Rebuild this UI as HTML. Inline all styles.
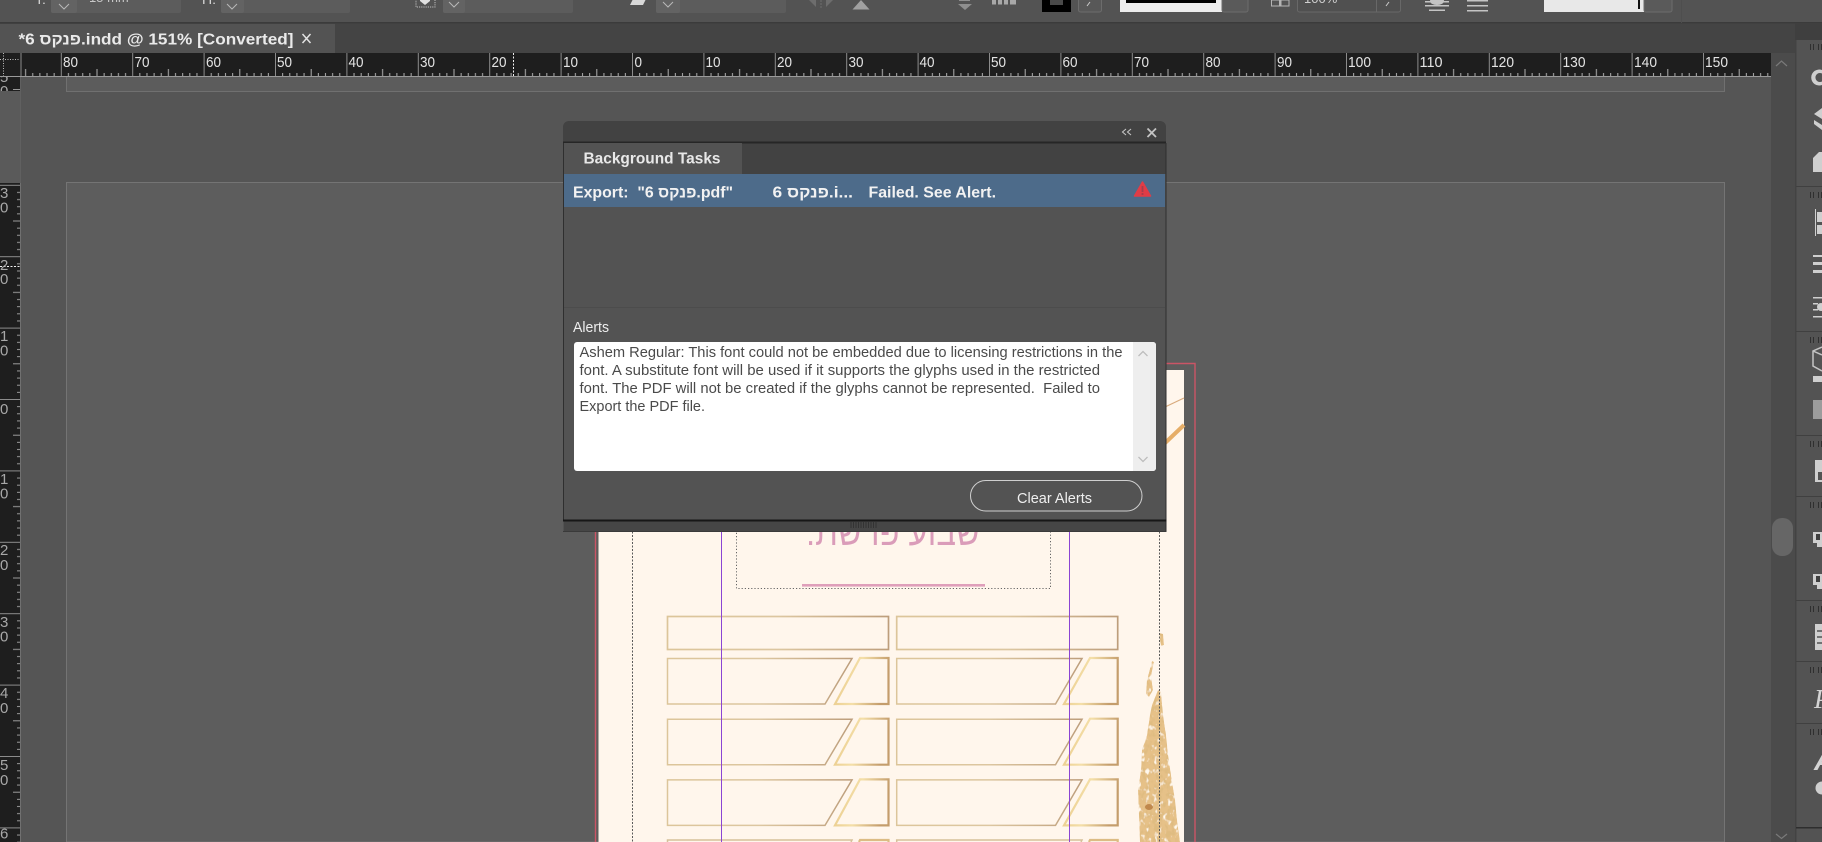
<!DOCTYPE html>
<html lang="en"><head><meta charset="utf-8"><title>Background Tasks</title>
<style>
html,body{margin:0;padding:0;background:#545454;width:1822px;height:842px;overflow:hidden}
svg{display:block;font-family:"Liberation Sans",sans-serif;overflow:hidden}
.rl{font-size:15px;fill:#e4e4e4}
.vl{font-size:15px;fill:#a8a8a8}
.pre{white-space:pre}
</style></head><body>
<svg width="1822" height="842" viewBox="0 0 1822 842" xmlns="http://www.w3.org/2000/svg">
<defs>
<linearGradient id="sm" x1="0" y1="0" x2="1" y2="0.2"><stop offset="0" stop-color="#e8c888"/><stop offset=".5" stop-color="#f4dfa8"/><stop offset="1" stop-color="#c49d6c"/></linearGradient>
<linearGradient id="bg1" x1="0" y1="0" x2="1" y2="0"><stop offset="0" stop-color="#dcc59a"/><stop offset=".5" stop-color="#dcc6a0"/><stop offset="1" stop-color="#bd9e7c"/></linearGradient>
<pattern id="rt" patternUnits="userSpaceOnUse" width="71.4" height="24" patternTransform="translate(632 53)">
<rect x="0" y="0" width="1" height="23" fill="#8c8c8c"/>
<g fill="#b0b0b0"><rect x="7.14" y="20" width="1" height="3"/><rect x="14.28" y="20" width="1" height="3"/><rect x="21.42" y="20" width="1" height="3"/><rect x="28.56" y="20" width="1" height="3"/><rect x="35.7" y="16" width="1" height="7"/><rect x="42.84" y="20" width="1" height="3"/><rect x="49.98" y="20" width="1" height="3"/><rect x="57.12" y="20" width="1" height="3"/><rect x="64.26" y="20" width="1" height="3"/></g>
</pattern>
<pattern id="rl" patternUnits="userSpaceOnUse" width="21" height="71.4" patternTransform="translate(0 399)">
<rect x="0" y="0" width="20" height="1" fill="#8c8c8c"/>
<g fill="#9a9a9a"><rect x="17" y="7.14" width="3" height="1"/><rect x="17" y="14.28" width="3" height="1"/><rect x="17" y="21.42" width="3" height="1"/><rect x="17" y="28.56" width="3" height="1"/><rect x="13" y="35.7" width="7" height="1"/><rect x="17" y="42.84" width="3" height="1"/><rect x="17" y="49.98" width="3" height="1"/><rect x="17" y="57.12" width="3" height="1"/><rect x="17" y="64.26" width="3" height="1"/></g>
</pattern>
<filter id="gold" x="0" y="0" width="1" height="1">
<feTurbulence type="fractalNoise" baseFrequency="0.24 0.16" numOctaves="2" seed="7" result="n"/>
<feColorMatrix in="n" type="matrix" values="0 0 0 0 .74  0 0 0 0 .5  0 0 0 0 .22  5 0 0 0 -2.3" result="dark"/>
<feColorMatrix in="n" type="matrix" values="0 0 0 0 1  0 0 0 0 .95  0 0 0 0 .86  0 5 0 0 -2.9" result="light"/>
<feMerge result="m"><feMergeNode in="SourceGraphic"/><feMergeNode in="dark"/><feMergeNode in="light"/></feMerge>
<feComposite in="m" in2="SourceGraphic" operator="in"/>
</filter>
<g id="row">
<polygon points="667.5,658.5 852,658.5 825,704 667.5,704" fill="none" stroke="url(#bg1)" stroke-width="1.5"/>
<polygon points="860,658 888.5,658 888.5,704 835,704" fill="none" stroke="url(#sm)" stroke-width="2.2"/>
<polygon points="896.7,658.5 1082,658.5 1055.5,704 896.7,704" fill="none" stroke="url(#bg1)" stroke-width="1.5"/>
<polygon points="1090,658 1117.7,658 1117.7,704 1064,704" fill="none" stroke="url(#sm)" stroke-width="2.2"/>
</g>
</defs>

<!-- canvas -->
<rect width="1822" height="842" fill="#555"/>
<path d="M66.500 60H1724.500V91.500H66.500z" fill="#5c5c5c" stroke="#707070"/>
<path d="M66.500 842V182.500H1724.500V842z" fill="#5d5d5d" stroke="#747474"/>
<rect x="20" y="76" width="1" height="766" fill="#606060"/>

<!-- document page -->
<path d="M595.500 842V363.500H1195V842" fill="none" stroke="#cb5566" stroke-width="1.400"/>
<rect x="598.500" y="370" width="585.500" height="472" fill="#fff6ec"/>
<path d="M1165 407 L1184 398" stroke="#d8aa7c" stroke-width="1.200" fill="none"/>
<path d="M1164 444 L1184 425" stroke="#e6ae68" stroke-width="4" fill="none"/>
<text x="893" y="545" text-anchor="middle" direction="rtl" font-size="38" fill="#da9cb9" textLength="174" lengthAdjust="spacingAndGlyphs">שבוע פרשת:</text>
<rect x="802" y="584" width="183" height="2.600" fill="#df9fba"/>
<path d="M736.500 520V588.500H1050.500V520" fill="none" stroke="#666" stroke-width="1" stroke-dasharray="1.200 2"/>

<!-- gold frames -->
<rect x="667.500" y="616.500" width="221" height="33" fill="none" stroke="url(#bg1)" stroke-width="1.700"/>
<rect x="896.700" y="616.500" width="221" height="33" fill="none" stroke="url(#bg1)" stroke-width="1.700"/>
<use href="#row"/>
<use href="#row" y="60.700"/>
<use href="#row" y="121.400"/>
<path d="M667.500 842V840H852L851 842M896.700 842V840H1082L1081 842" fill="none" stroke="#d6c09a" stroke-width="1.500"/>
<path d="M859 842L860 840H888.500V842M1089 842L1090 840H1117.700V842" fill="none" stroke="#dcbc84" stroke-width="2.200"/>

<!-- gold splatter -->
<g filter="url(#gold)" fill="#e6c188">
<polygon points="1158,690 1161,692 1163,715 1166,735 1168,755 1171,775 1175,800 1177,820 1180,842 1140,842 1139,815 1138,790 1141,770 1142,750 1147,735 1150,715 1152,705"/>
<polygon points="1159,633 1163,634 1164,645 1161,646"/>
<polygon points="1152,661 1154,662 1151,676 1153,690 1149,697 1146,694 1147,680"/>
</g>
<ellipse cx="1149" cy="807" rx="4" ry="3" fill="#b67a3f" opacity=".8"/>

<!-- guides -->
<path d="M632.500 500V842M1159.500 500V842" stroke="#5a5a5a" stroke-width="1" stroke-dasharray="2 1.500"/>
<path d="M721.500 500V842M1069.500 500V842" stroke="#8b45d3" stroke-width="1"/>

<!-- top toolbar -->
<rect width="1822" height="23" fill="#535353"/>
<rect y="22" width="1822" height="1.500" fill="#3b3b3b"/>
<g fill="#5c5c5c">
<rect x="51" y="-3" width="130" height="16" rx="2"/>
<rect x="221" y="-3" width="129" height="16" rx="2"/>
<rect x="443" y="-3" width="130" height="16" rx="2"/>
<rect x="656" y="-3" width="130" height="16" rx="2"/>
</g>
<g fill="#636363">
<rect x="51" y="-3" width="26" height="16" rx="2"/>
<rect x="221" y="-3" width="23" height="16" rx="2"/>
<rect x="443" y="-3" width="22" height="16" rx="2"/>
<rect x="656" y="-3" width="24" height="16" rx="2"/>
</g>
<path d="M59 4l5 5 5-5M227 4l5 5 5-5M449 2l5 5 5-5M663 2l5 5 5-5" fill="none" stroke="#b8b8b8" stroke-width="1"/>
<text x="35" y="4" font-size="14" fill="#d8d8d8">T:</text>
<text x="89" y="2" font-size="13" fill="#c8c8c8">15 mm</text>
<text x="202" y="4" font-size="14" fill="#d8d8d8">H:</text>
<path d="M416 -1V7H435V-1" fill="none" stroke="#bdbdbd" stroke-dasharray="1.200 1"/>
<path d="M420 -1h10v2l-5 4-5-4z" fill="#e0e0e0"/>
<path d="M633 -1h13l-3 6h-13z" fill="#d8d8d8"/>
<path d="M808 -1l8 8V-1zM834 -1l-8 8V-1z" fill="#6d6d6d"/>
<path d="M821 0v8" stroke="#6d6d6d" stroke-dasharray="2 1"/>
<path d="M861 0l8.500 9.500H852.500z" fill="#a0a0a0"/>
<path d="M959 0h11v1h-11zM958 4h14l-7 6z" fill="#8f8f8f"/>
<g fill="#a8a8a8"><rect x="992" y="0" width="4" height="4.500"/><rect x="998" y="0" width="4" height="4.500"/><rect x="1004" y="0" width="4" height="4.500"/><rect x="1010" y="0" width="6" height="4.500"/></g>
<rect x="1042" y="-3" width="29" height="15" fill="#000"/>
<rect x="1050" y="-3" width="13" height="8" fill="#4a4a4a"/>
<rect x="1078.500" y="-3" width="23" height="15" rx="2" fill="#585858" stroke="#6c6c6c"/>
<path d="M1087 6l3-4" stroke="#ccc" fill="none"/>
<rect x="1120" y="-3" width="102" height="15" fill="#ececec"/>
<rect x="1126" y="-3" width="90" height="6" fill="#000"/>
<rect x="1222" y="-3" width="26" height="15" rx="2" fill="#5a5a5a" stroke="#6c6c6c"/>
<path d="M1271.500 6V0H1289V6z" fill="none" stroke="#b4b4b4"/><rect x="1279" y="0" width="2.500" height="6" fill="#b4b4b4"/>
<rect x="1297.500" y="-3" width="103" height="15" rx="2" fill="#505050" stroke="#686868"/>
<rect x="1376" y="-3" width="1" height="15" fill="#686868"/>
<text x="1304" y="3" font-size="13" fill="#cfcfcf">100%</text>
<path d="M1386 6l3-4" stroke="#ccc" fill="none"/>
<g fill="#c4c4c4"><ellipse cx="1437" cy="1" rx="7" ry="4"/><rect x="1425" y="1" width="24" height="1.500"/><rect x="1425" y="5" width="24" height="1.500"/><rect x="1429" y="9.500" width="16" height="1.500"/>
<rect x="1467" y="0" width="21" height="1.500"/><rect x="1467" y="5" width="21" height="1.500"/><rect x="1467" y="10" width="21" height="1.500"/></g>
<rect x="1544" y="-3" width="100" height="15" fill="#e8e8e8"/>
<rect x="1638" y="-3" width="2" height="12" fill="#111"/>
<rect x="1644" y="-3" width="28" height="15" rx="2" fill="#5a5a5a" stroke="#6c6c6c"/>
<rect x="1681" y="0" width="1" height="23" fill="#4e4e4e"/>

<!-- tab bar -->
<rect y="23.500" width="1796" height="29.500" fill="#444"/>
<rect y="24" width="335" height="29" fill="#535353"/>
<text class="pre" x="18.500" y="44.500" font-size="16" font-weight="bold" fill="#eaeaea" direction="ltr" textLength="275" lengthAdjust="spacingAndGlyphs">*6 פנקס.indd @ 151% [Converted]</text>
<path d="M302.500 34l8 9M310.500 34l-8 9" stroke="#e2e2e2" stroke-width="1.500" fill="none"/>

<!-- top ruler -->
<rect x="0" y="53" width="1771" height="23" fill="#1e1e1e"/>
<rect x="21" y="53" width="1750" height="23" fill="url(#rt)"/>
<rect x="0" y="76" width="1771" height="1" fill="#9a9a9a"/>
<rect x="20.500" y="53" width="1" height="23" fill="#8c8c8c"/>
<path d="M3.500 53V76M0 59.500H20" stroke="#bdbdbd" stroke-width="1" stroke-dasharray="1 1.500" fill="none"/>
<path d="M513.500 53V76" stroke="#f0f0f0" stroke-width="1" stroke-dasharray="2 1.500"/>
<g class="rl">
<text x="63" y="67" textLength="15" lengthAdjust="spacingAndGlyphs">80</text><text x="134.500" y="67" textLength="15" lengthAdjust="spacingAndGlyphs">70</text><text x="206" y="67" textLength="15" lengthAdjust="spacingAndGlyphs">60</text><text x="277" y="67" textLength="15" lengthAdjust="spacingAndGlyphs">50</text><text x="348.500" y="67" textLength="15" lengthAdjust="spacingAndGlyphs">40</text><text x="420" y="67" textLength="15" lengthAdjust="spacingAndGlyphs">30</text><text x="491.500" y="67" textLength="15" lengthAdjust="spacingAndGlyphs">20</text><text x="563" y="67" textLength="15" lengthAdjust="spacingAndGlyphs">10</text><text x="634.500" y="67" textLength="7.500" lengthAdjust="spacingAndGlyphs">0</text><text x="705.500" y="67" textLength="15" lengthAdjust="spacingAndGlyphs">10</text><text x="777" y="67" textLength="15" lengthAdjust="spacingAndGlyphs">20</text><text x="848.500" y="67" textLength="15" lengthAdjust="spacingAndGlyphs">30</text><text x="919.500" y="67" textLength="15" lengthAdjust="spacingAndGlyphs">40</text><text x="991" y="67" textLength="15" lengthAdjust="spacingAndGlyphs">50</text><text x="1062.500" y="67" textLength="15" lengthAdjust="spacingAndGlyphs">60</text><text x="1134" y="67" textLength="15" lengthAdjust="spacingAndGlyphs">70</text><text x="1205.500" y="67" textLength="15" lengthAdjust="spacingAndGlyphs">80</text><text x="1277" y="67" textLength="15" lengthAdjust="spacingAndGlyphs">90</text><text x="1348" y="67" textLength="23" lengthAdjust="spacingAndGlyphs">100</text><text x="1419.500" y="67" textLength="23" lengthAdjust="spacingAndGlyphs">110</text><text x="1491" y="67" textLength="23" lengthAdjust="spacingAndGlyphs">120</text><text x="1562.500" y="67" textLength="23" lengthAdjust="spacingAndGlyphs">130</text><text x="1634" y="67" textLength="23" lengthAdjust="spacingAndGlyphs">140</text><text x="1705" y="67" textLength="23" lengthAdjust="spacingAndGlyphs">150</text>
</g>

<!-- left ruler -->
<rect x="0" y="77" width="20" height="14" fill="#1e1e1e"/>
<rect x="0" y="91" width="20" height="92" fill="#5a5a5a"/>
<rect x="0" y="183" width="20" height="659" fill="#1e1e1e"/>
<rect x="0" y="183" width="21" height="659" fill="url(#rl)"/>
<rect x="13" y="89" width="7" height="1" fill="#9a9a9a"/>
<rect x="20" y="183" width="1" height="659" fill="#707070"/>
<path d="M0 266.500H20" stroke="#f0f0f0" stroke-dasharray="2 1.500"/>
<svg x="0" y="77" width="20" height="14"><text x="0" y="5" class="vl">5</text><text x="0" y="19" class="vl">0</text></svg>
<g class="vl">
<text x="0" y="198">3</text><text x="0" y="212.500">0</text>
<text x="0" y="270">2</text><text x="0" y="284">0</text>
<text x="0" y="341">1</text><text x="0" y="355.500">0</text>
<text x="0" y="414">0</text>
<text x="0" y="484">1</text><text x="0" y="498.500">0</text>
<text x="0" y="555">2</text><text x="0" y="570">0</text>
<text x="0" y="627">3</text><text x="0" y="641.500">0</text>
<text x="0" y="698">4</text><text x="0" y="713">0</text>
<text x="0" y="770">5</text><text x="0" y="785">0</text>
<text x="0" y="838.500">6</text>
</g>

<!-- vertical scrollbar -->
<rect x="1771" y="53" width="25" height="789" fill="#4b4b4b"/>
<path d="M1776 66l5.500-5 5.500 5" fill="none" stroke="#7a7a7a" stroke-width="1.200"/>
<path d="M1776 834l5.500 4.500 5.500-4.500" fill="none" stroke="#7a7a7a" stroke-width="1.200"/>
<rect x="1772" y="518" width="21" height="38" rx="10" fill="#666"/>

<!-- right dock -->
<rect x="1795" y="23" width="27" height="819" fill="#535353"/>
<rect x="1795" y="23" width="27" height="17" fill="#3f3f3f"/>
<rect x="1795" y="40" width="1.500" height="802" fill="#434343"/>
<g fill="#404040">
<rect x="1796" y="186" width="26" height="1"/><rect x="1796" y="331" width="26" height="1"/><rect x="1796" y="435" width="26" height="1"/><rect x="1796" y="496" width="26" height="1"/><rect x="1796" y="600" width="26" height="1"/><rect x="1796" y="661" width="26" height="1"/><rect x="1796" y="723" width="26" height="1"/><rect x="1796" y="827" width="26" height="1.500" fill="#2e2e2e"/>
</g>
<path d="M1810.500 44v6M1813.500 44v6M1818.500 44v6M1821.500 44v6M1810.500 192v6M1813.500 192v6M1818.500 192v6M1821.500 192v6M1810.500 337v6M1813.500 337v6M1818.500 337v6M1821.500 337v6M1810.500 441v6M1813.500 441v6M1818.500 441v6M1821.500 441v6M1810.500 502v6M1813.500 502v6M1818.500 502v6M1821.500 502v6M1810.500 606v6M1813.500 606v6M1818.500 606v6M1821.500 606v6M1810.500 667v6M1813.500 667v6M1818.500 667v6M1821.500 667v6M1810.500 729v6M1813.500 729v6M1818.500 729v6M1821.500 729v6" stroke="#2f2f2f" stroke-width="1"/>
<g fill="#cfcfcf">
<path d="M1822 70a8 8 0 1 0 0 15v-3.500a4.500 4.500 0 1 1 0-8z"/>
<path d="M1822 108l-8 6 8 5zM1814 120l8 5v5l-8-6z"/>
<path d="M1819 152h3v20h-9v-14z"/>
<rect x="1815" y="209" width="1" height="27"/><rect x="1817" y="212" width="5" height="10"/><rect x="1817" y="225" width="5" height="9"/>
<rect x="1813" y="255" width="9" height="2"/><rect x="1813" y="262" width="9" height="3"/><rect x="1813" y="270" width="9" height="3"/>
<rect x="1813" y="297" width="9" height="1.500"/><rect x="1813" y="303" width="5" height="1.500"/><rect x="1813" y="309" width="5" height="1.500"/><rect x="1813" y="316" width="9" height="1.500"/><circle cx="1821" cy="307" r="4"/>
<rect x="1813" y="376" width="9" height="6"/>
<rect x="1815" y="460" width="7" height="22"/>
<rect x="1813" y="532" width="9" height="11"/><rect x="1817" y="541" width="5" height="6"/>
<rect x="1813" y="574" width="9" height="11"/><rect x="1817" y="583" width="5" height="6"/>
<rect x="1815" y="624" width="7" height="26"/>
<circle cx="1822" cy="788" r="6.500"/>
</g>
<path d="M1822 347l-9 4v15l9 5M1813 351l9 4" fill="none" stroke="#c4c4c4" stroke-width="1.500"/>
<rect x="1813" y="400" width="9" height="19" fill="#9c9c9c"/>
<rect x="1818" y="472" width="4" height="8" fill="#535353"/>
<rect x="1816" y="534" width="4" height="6" fill="#404040"/><rect x="1816" y="576" width="4" height="6" fill="#404040"/>
<path d="M1817 631h5M1817 637h5M1817 643h5" stroke="#535353" stroke-width="1.500"/>
<text x="1814" y="708" font-family="Liberation Serif" font-style="italic" font-size="27" fill="#d4d4d4">P</text>
<text x="1814" y="770" font-style="italic" font-weight="bold" font-size="28" fill="#d4d4d4">A</text>

<!-- Background Tasks panel -->
<path d="M563 531.500V127a6 6 0 0 1 6-6h591a6 6 0 0 1 6 6V531.500z" fill="#535353"/>
<path d="M563 142V127a6 6 0 0 1 6-6h591a6 6 0 0 1 6 6V142z" fill="#424242"/>
<rect x="563" y="143" width="603" height="31" fill="#424242"/>
<rect x="563" y="141.500" width="603" height="2" fill="#262626"/>
<rect x="564" y="143" width="178" height="31" fill="#535353"/>
<text x="583.500" y="163.500" font-size="16" font-weight="bold" fill="#e8e8e8" textLength="137" lengthAdjust="spacingAndGlyphs">Background Tasks</text>
<path d="M1126 129l-3.500 3 3.500 3M1131 129l-3.500 3 3.500 3" fill="none" stroke="#c4c4c4" stroke-width="1.100"/>
<path d="M1147.500 128.500l8.500 8.500M1156 128.500l-8.500 8.500" fill="none" stroke="#c4c4c4" stroke-width="1.800"/>

<rect x="564" y="174" width="601" height="33" fill="#4d6b8a"/>
<text class="pre" x="573" y="197.500" font-size="16" font-weight="bold" fill="#f2f2f2" direction="ltr" textLength="160" lengthAdjust="spacingAndGlyphs">Export:  "6 פנקס.pdf"</text>
<text class="pre" x="772.500" y="197.500" font-size="16" font-weight="bold" fill="#f2f2f2" direction="ltr" textLength="80.500" lengthAdjust="spacingAndGlyphs">6 פנקס.i...</text>
<text x="868.500" y="197.500" font-size="16" font-weight="bold" fill="#f2f2f2" textLength="127.500" lengthAdjust="spacingAndGlyphs">Failed. See Alert.</text>
<path d="M1142.500 182L1150.500 196H1134.500z" fill="#e03c46" stroke="#e03c46" stroke-width="1.500" stroke-linejoin="round"/>
<rect x="1141.600" y="186" width="1.800" height="6" fill="#a63d4c"/><rect x="1141.600" y="193" width="1.800" height="2" fill="#a63d4c"/>

<rect x="564" y="307" width="601" height="1" fill="#4c4c4c"/>
<text x="573" y="332" font-size="15" fill="#eee" textLength="36" lengthAdjust="spacingAndGlyphs">Alerts</text>

<rect x="574" y="342" width="582" height="129" rx="3" fill="#fff"/>
<path d="M1133 342h20a3 3 0 0 1 3 3v123a3 3 0 0 1-3 3h-20z" fill="#eeeeee"/>
<path d="M1138.500 356l4.500-4.500 4.500 4.500M1138.500 457l4.500 4.500 4.500-4.500" fill="none" stroke="#bdbdbd" stroke-width="1.300"/>
<g font-size="15" fill="#4a4a4a">
<text class="pre" x="579.500" y="357" textLength="543" lengthAdjust="spacingAndGlyphs">Ashem Regular: This font could not be embedded due to licensing restrictions in the</text>
<text class="pre" x="579.500" y="375" textLength="520.500" lengthAdjust="spacingAndGlyphs">font. A substitute font will be used if it supports the glyphs used in the restricted</text>
<text class="pre" x="579.500" y="393" textLength="520.500" lengthAdjust="spacingAndGlyphs">font. The PDF will not be created if the glyphs cannot be represented.  Failed to</text>
<text class="pre" x="579.500" y="411" textLength="125.500" lengthAdjust="spacingAndGlyphs">Export the PDF file.</text>
</g>
<rect x="970.500" y="480.500" width="171.500" height="30.500" rx="15.250" fill="none" stroke="#cfcfcf" stroke-width="1"/>
<text x="1017" y="503" font-size="15" fill="#efefef" textLength="75" lengthAdjust="spacingAndGlyphs">Clear Alerts</text>

<rect x="563" y="143" width="1" height="378" fill="#2f2f2f"/>
<rect x="1165.500" y="143" width="1" height="388" fill="#2f2f2f"/>
<rect x="563" y="519.500" width="603.500" height="2" fill="#171717"/>
<rect x="564" y="521.500" width="601.500" height="10" fill="#464646"/>
<rect x="563" y="531" width="603.500" height="1" fill="#3a3a3a"/>
<path d="M851 522v6M853.500 522v6M856 522v6M858.500 522v6M861 522v6M863.500 522v6M866 522v6M868.500 522v6M871 522v6M873.500 522v6M876 522v6" stroke="#333" stroke-width="1"/>
</svg>
</body></html>
